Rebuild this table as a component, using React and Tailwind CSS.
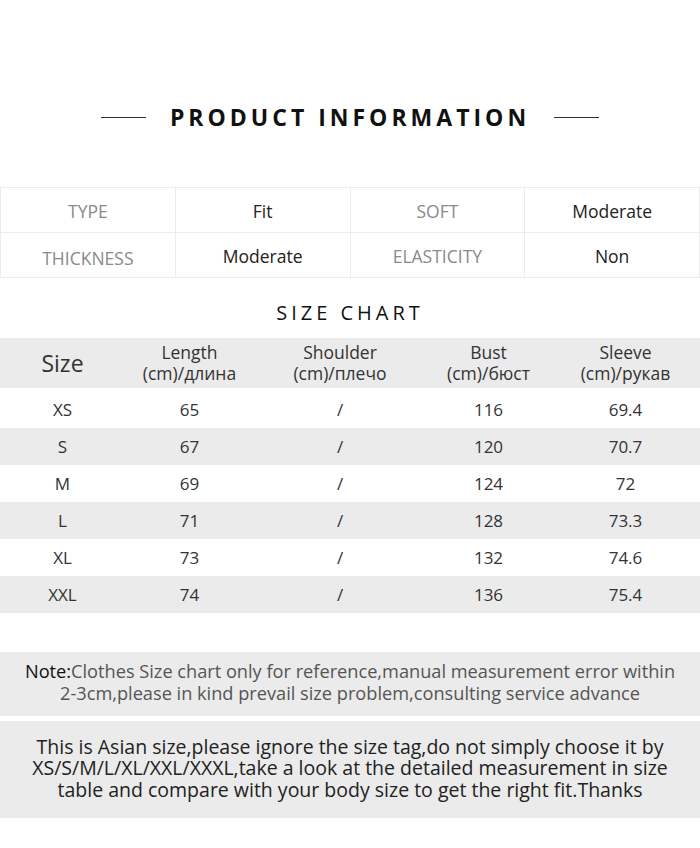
import React from "react";

const INFO = [
  ["TYPE", "Fit", "SOFT", "Moderate"],
  ["THICKNESS", "Moderate", "ELASTICITY", "Non"],
];

const SIZES = [
  ["XS", "65", "/", "116", "69.4"],
  ["S", "67", "/", "120", "70.7"],
  ["M", "69", "/", "124", "72"],
  ["L", "71", "/", "128", "73.3"],
  ["XL", "73", "/", "132", "74.6"],
  ["XXL", "74", "/", "136", "75.4"],
];

const COLS = "grid grid-cols-[125px_129px_172px_125px_149px]";

export default function App() {
  return (
    <main className="w-[700px] h-[848px] bg-white font-['Open_Sans','Noto_Sans',sans-serif] text-[#333]">
      <div className="flex h-[187px] items-start justify-center gap-6 pt-[102px]">
        <span className="mt-[15px] h-px w-[45px] bg-[#333]" />
        <h1 className="text-[23px] font-bold leading-[30px] tracking-[4px] text-[#111]">PRODUCT INFORMATION</h1>
        <span className="mt-[15px] h-px w-[45px] bg-[#333]" />
      </div>

      <div className="border-t border-l border-[#ececec]">
        {INFO.map((row, i) => (
          <div key={i} className="grid h-[45px] grid-cols-4 border-b border-[#ececec]">
            {row.map((cell, j) => (
              <div
                key={j}
                className={`flex items-center justify-center border-r border-[#ececec] text-[17.5px] ${
                  j % 2 === 0 ? "text-[#8a8a8a]" : "text-[#222]"
                } ${i === 1 && j === 0 ? "pt-[6px]" : "pt-[2px]"} ${i === 1 && j === 2 ? "pt-0" : ""}`}
              >
                {cell}
              </div>
            ))}
          </div>
        ))}
      </div>

      <h2 className="mt-[20px] text-center text-[20px] leading-[30px] tracking-[4px] text-[#111]">SIZE CHART</h2>

      <div className={`${COLS} mt-[10px] h-[50px] items-center bg-[#ebebeb] text-center text-[#333]`}>
        <div className="text-[23px] leading-[28px]">Size</div>
        <div className="text-[17.5px] leading-[21px]">Length<br />(cm)/длина</div>
        <div className="text-[17.5px] leading-[21px]">Shoulder<br />(cm)/плечо</div>
        <div className="text-[17.5px] leading-[21px]">Bust<br />(cm)/бюст</div>
        <div className="text-[17.5px] leading-[21px]">Sleeve<br />(cm)/рукав</div>
      </div>

      <div className="mt-[3px]">
        {SIZES.map((row, i) => (
          <div
            key={row[0]}
            className={`${COLS} h-[37px] items-center text-center text-[17px] text-[#333] ${
              i % 2 === 1 ? "bg-[#ebebeb]" : ""
            }`}
          >
            {row.map((cell, j) => (
              <div key={j}>{cell}</div>
            ))}
          </div>
        ))}
      </div>

      <div className="mt-[39px] flex h-[64px] items-center justify-center bg-[#ebebeb] px-2 pb-[4px] text-center text-[18.2px] leading-[22px] text-[#555]">
        <p>
          <span className="text-[#111]">Note:</span>Clothes Size chart only for reference,manual measurement error within
          <br />
          2-3cm,please in kind prevail size problem,consulting service advance
        </p>
      </div>

      <div className="mt-[5px] flex h-[97px] items-center justify-center bg-[#ebebeb] px-2 pb-[3px] text-center text-[19.5px] leading-[21.5px] text-[#222]">
        <p>
          This is Asian size,please ignore the size tag,do not simply choose it by
          <br />
          XS/S/M/L/XL/XXL/XXXL,take a look at the detailed measurement in size
          <br />
          table and compare with your body size to get the right fit.Thanks
        </p>
      </div>
    </main>
  );
}
